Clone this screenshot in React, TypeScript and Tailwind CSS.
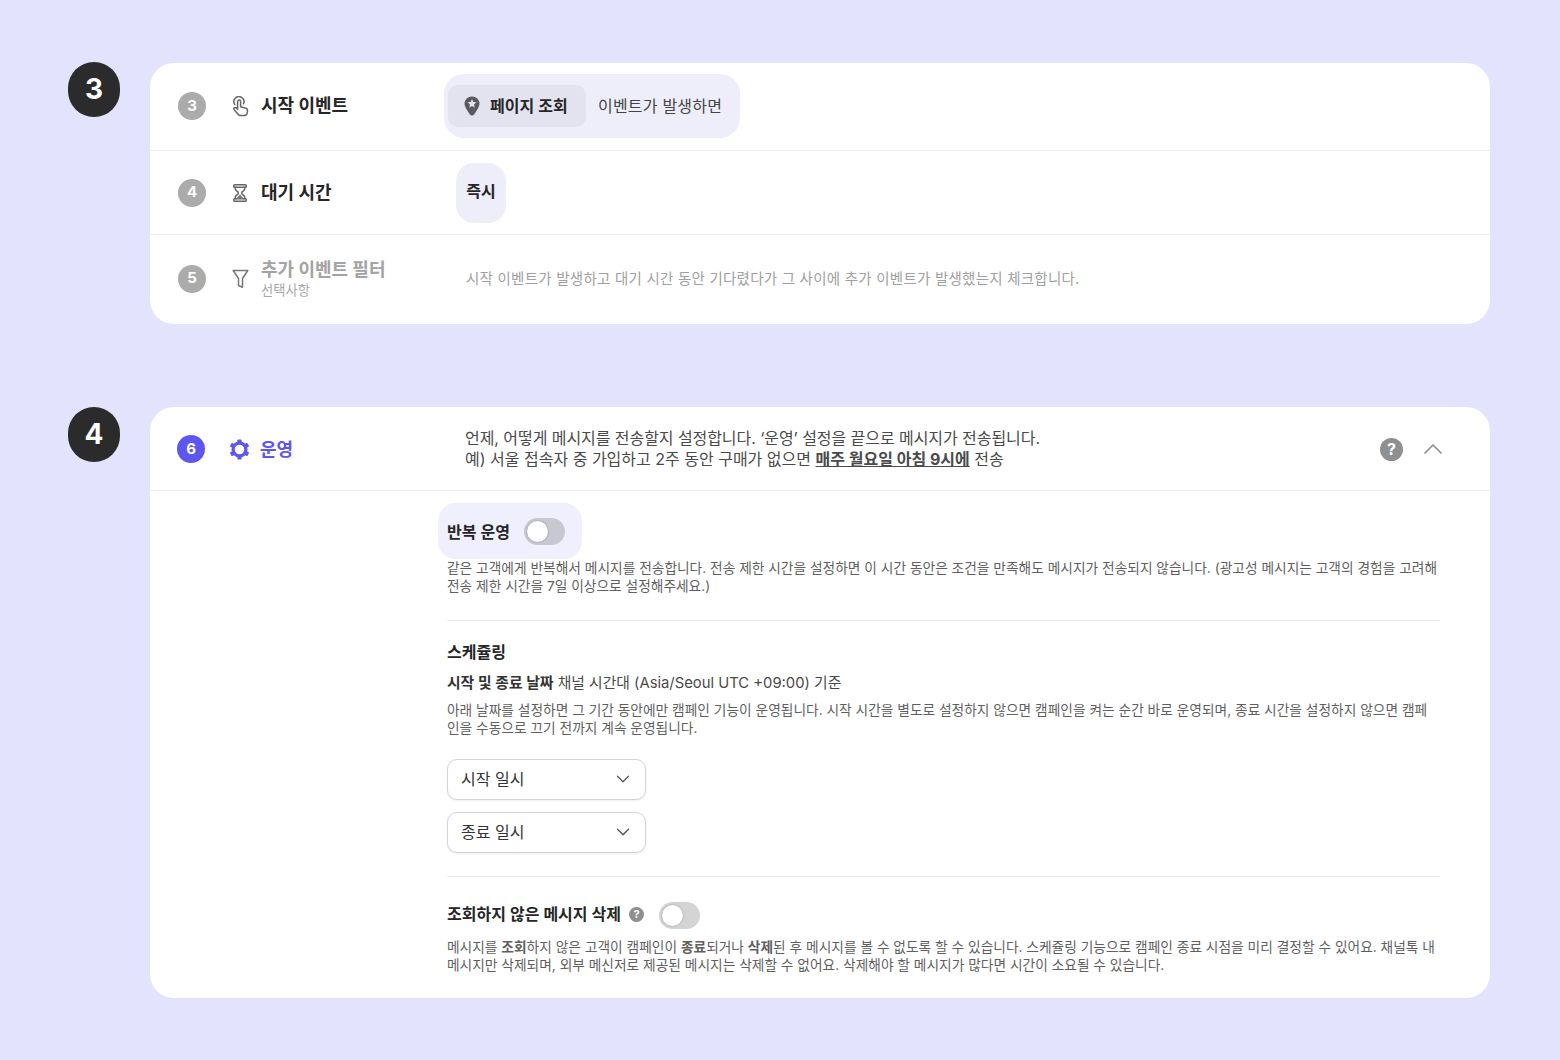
import { ChevronDown, ChevronUp } from "lucide-react";
import type { ReactNode } from "react";

const FONT = "font-['Inter','Noto_Sans_CJK_KR',sans-serif]";

function StepBadge({ n }: { n: number }) {
  return (
    <div className="flex h-[55px] w-[52px] shrink-0 items-center justify-center rounded-full bg-[#2b2b2b] pb-[2px] text-[28px] font-bold text-white">
      {n}
    </div>
  );
}

function NumberDot({ n, active }: { n: number; active?: boolean }) {
  return (
    <div
      className={`flex h-[28px] w-[28px] shrink-0 items-center justify-center rounded-full text-[15px] font-bold text-white ${
        active ? "bg-[#5e56f0]" : "bg-[#ababab]"
      }`}
    >
      {n}
    </div>
  );
}

function TapIcon() {
  return (
    <svg className="h-[21px] w-[17px] shrink-0" viewBox="0 0 17 21" fill="none" stroke="#666" strokeWidth="1.5" strokeLinecap="round" strokeLinejoin="round">
      <path d="M2.800 8.500a5 5 0 1 1 8.600-.6" />
      <path d="M5.600 5.500a1.500 1.500 0 0 1 3 0v5.200l4.600 1.200a3 3 0 0 1 2.300 3.200l-.3 2.100a3 3 0 0 1-3 2.300H8.500a3 3 0 0 1-2.400-1.200L2 13.400c-.8-1.100.6-2.500 1.700-1.700l1.900 1.400z" />
    </svg>
  );
}

function HourglassIcon() {
  return (
    <svg className="h-[18px] w-[14px] shrink-0" viewBox="0 0 14 18" fill="none" stroke="#666" strokeWidth="1.5" strokeLinecap="round" strokeLinejoin="round">
      <rect x="0.800" y="0.800" width="12.400" height="2.400" rx="0.800" />
      <rect x="0.800" y="14.800" width="12.400" height="2.400" rx="0.800" />
      <path d="M2.200 3.200v1.500c0 1.800 3.200 2.800 3.200 4.300s-3.200 2.500-3.200 4.300v1.500M11.800 3.200v1.500c0 1.800-3.200 2.800-3.200 4.300s3.200 2.500 3.200 4.300v1.500" />
      <path d="M7 10.200l3.600 4.600H3.400L7 10.200z" fill="#777" stroke="none" />
    </svg>
  );
}

function FunnelIcon() {
  return (
    <svg className="h-[20px] w-[17px] shrink-0" viewBox="0 0 17 20" fill="none" stroke="#777" strokeWidth="1.5" strokeLinecap="round" strokeLinejoin="round">
      <path d="M1.200 1.500h14.600L10.500 9.500v8.800l-4-1.800v-7z" />
    </svg>
  );
}

function PinStarIcon() {
  return (
    <svg className="h-[20px] w-[16px] shrink-0" viewBox="0 0 16 20">
      <path fill="#5a5a5e" d="M8 .5C3.800.5.500 3.700.5 7.800c0 3 2.300 6.300 5.400 10.700.9 1.200 3.300 1.200 4.200 0 3.100-4.400 5.400-7.700 5.400-10.700C15.500 3.700 12.200.5 8 .5z" />
      <polygon fill="#e3e3ef" points="8,3.100 9.250,6 12.400,6.300 10,8.400 10.700,11.400 8,9.900 5.300,11.400 6,8.400 3.600,6.300 6.750,6" />
    </svg>
  );
}

function GearIcon() {
  return (
    <svg className="h-[23px] w-[23px] shrink-0" viewBox="0 0 24 24" fill="#5e56f0">
      <circle cx="12" cy="12" r="6.700" fill="none" stroke="#5e56f0" strokeWidth="3.400" />
      <rect x="9.800" y="1.500" width="4.400" height="4.500" rx="0.800" />
      <rect x="9.800" y="1.500" width="4.400" height="4.500" rx="0.800" transform="rotate(60 12 12)" />
      <rect x="9.800" y="1.500" width="4.400" height="4.500" rx="0.800" transform="rotate(120 12 12)" />
      <rect x="9.800" y="1.500" width="4.400" height="4.500" rx="0.800" transform="rotate(180 12 12)" />
      <rect x="9.800" y="1.500" width="4.400" height="4.500" rx="0.800" transform="rotate(240 12 12)" />
      <rect x="9.800" y="1.500" width="4.400" height="4.500" rx="0.800" transform="rotate(300 12 12)" />
    </svg>
  );
}

function HelpDot({ size }: { size: "sm" | "lg" }) {
  return (
    <div
      className={
        size === "lg"
          ? "flex h-[23px] w-[23px] items-center justify-center rounded-full bg-[#8f8f8f] text-[16px] font-bold text-white"
          : "flex h-[15px] w-[15px] items-center justify-center rounded-full bg-[#8f8f8f] text-[11px] font-bold text-white"
      }
    >
      ?
    </div>
  );
}

function Toggle({ className }: { className: string }) {
  return (
    <div className={`flex h-[27px] w-[41px] shrink-0 items-center rounded-full p-[3px] ${className}`}>
      <div className="aspect-square h-full rounded-full bg-white shadow-[0_0_2px_rgba(0,0,0,0.35)]" />
    </div>
  );
}

function DateSelect({ label }: { label: string }) {
  return (
    <div className="flex h-[41px] w-[199px] items-center justify-between rounded-[10px] border border-[#d5d5d9] bg-white pb-px pl-[13px] pr-[11px] text-[16px] text-[#333] shadow-[0_1px_2px_rgba(0,0,0,0.08)]">
      {label}
      <ChevronDown size={22} color="#555" strokeWidth={1.4} />
    </div>
  );
}

function StepRow({
  n,
  icon,
  title,
  sub,
  muted,
  className,
  children,
}: {
  n: number;
  icon: ReactNode;
  title: string;
  sub?: string;
  muted?: boolean;
  className: string;
  children: ReactNode;
}) {
  return (
    <div className={`flex items-center ${className}`}>
      <div className="flex w-[294px] shrink-0 items-center pl-[28px]">
        <NumberDot n={n} />
        <div className="ml-[24px] flex w-[20px] justify-center">{icon}</div>
        <div className="ml-[11px]">
          <div className={`text-[18px] leading-[22px] font-bold ${muted ? "text-[#a3a3a3]" : "text-[#262626]"}`}>{title}</div>
          {sub && <div className="text-[13.300px] leading-[18px] text-[#a8a8a8]">{sub}</div>}
        </div>
      </div>
      {children}
    </div>
  );
}

export default function App() {
  return (
    <div className={`${FONT} h-[1060px] w-[1560px] overflow-hidden bg-[#e3e3fe] pl-[68px] pt-[62px]`}>
      {/* 3: trigger */}
      <div className="flex gap-[30px]">
        <StepBadge n={3} />
        <div className="mt-px w-[1340px] overflow-hidden rounded-[24px] bg-white">
          <StepRow n={3} icon={<TapIcon />} title="시작 이벤트" className="h-[88px] border-b border-[#efefef] pb-px">
            <div className="flex h-[64px] w-[296px] items-center rounded-[20px] bg-[#eeeefb] pl-[4px]">
              <div className="flex h-[42px] w-[138px] items-center gap-[10px] rounded-[10px] bg-[#e3e3ef] pl-[16px] text-[16px] font-semibold text-[#262626]">
                <PinStarIcon />
                페이지 조회
              </div>
              <span className="mb-px ml-[12px] text-[16px] tracking-[0.2px] text-[#444]">이벤트가 발생하면</span>
            </div>
          </StepRow>
          <StepRow n={4} icon={<HourglassIcon />} title="대기 시간" className="h-[84px] border-b border-[#efefef]">
            <div className="ml-[12px] flex h-[60px] w-[50px] items-center justify-center rounded-[18px] bg-[#eeeefb] pb-[3px] text-[16px] font-semibold text-[#262626]">
              즉시
            </div>
          </StepRow>
          <StepRow n={5} icon={<FunnelIcon />} title="추가 이벤트 필터" sub="선택사항" muted className="h-[89px] pb-[2px]">
            <p className="ml-[22px] text-[14.500px] tracking-[0.25px] text-[#a0a0a0]">
              시작 이벤트가 발생하고 대기 시간 동안 기다렸다가 그 사이에 추가 이벤트가 발생했는지 체크합니다.
            </p>
          </StepRow>
        </div>
      </div>

      {/* 4: operation */}
      <div className="mt-[83px] flex gap-[30px]">
        <StepBadge n={4} />
        <div className="w-[1340px] overflow-hidden rounded-[24px] bg-white">
          <div className="flex h-[84px] items-center border-b border-[#efefef] pt-px">
            <div className="flex w-[315px] shrink-0 items-center pl-[27px]">
              <NumberDot n={6} active />
              <div className="ml-[23px] flex w-[22px] justify-center">
                <GearIcon />
              </div>
              <span className="ml-[10px] text-[18px] font-bold text-[#5e56f0]">운영</span>
            </div>
            <p className="text-[16px] leading-[21px] whitespace-nowrap text-[#4a4a4a]">
              <span className="tracking-[-0.06px]">언제, 어떻게 메시지를 전송할지 설정합니다. ‘운영’ 설정을 끝으로 메시지가 전송됩니다.</span>
              <br />
              예) 서울 접속자 중 가입하고 2주 동안 구매가 없으면{" "}
              <span className="font-bold underline">매주 월요일 아침 9시에</span> 전송
            </p>
            <div className="ml-auto mr-[41px] flex items-center gap-[14px]">
              <HelpDot size="lg" />
              <ChevronUp size={32} color="#8f8f8f" strokeWidth={1.3} />
            </div>
          </div>

          <div className="pb-[24px] pl-[297px] pr-[50px] pt-[12px]">
            <div className="-ml-[9px] flex h-[56px] w-[144px] items-center gap-[14px] rounded-[18px] bg-[#f0effd] pl-[9px] pt-px text-[16px] font-semibold text-[#262626]">
              반복 운영
              <Toggle className="bg-[#c8c8d2]" />
            </div>
            <p className="text-[13.730px] leading-[18px] whitespace-nowrap text-[#5f5f5f]">
              같은 고객에게 반복해서 메시지를 전송합니다. 전송 제한 시간을 설정하면 이 시간 동안은 조건을 만족해도 메시지가 전송되지 않습니다. (광고성 메시지는 고객의 경험을 고려해
              <br />
              전송 제한 시간을 7일 이상으로 설정해주세요.)
            </p>

            <div className="mt-[25px] border-t border-[#ececec] pt-[21px]">
              <h3 className="text-[16px] leading-[20px] font-semibold text-[#262626]">스케쥴링</h3>
              <p className="mt-[11px] text-[14.800px] leading-[20px] text-[#4a4a4a]">
                <span className="font-semibold text-[#333]">시작 및 종료 날짜</span> 채널 시간대 (Asia/Seoul UTC +09:00) 기준
              </p>
              <p className="mt-[8px] text-[13.730px] leading-[18px] whitespace-nowrap text-[#5f5f5f]">
                아래 날짜를 설정하면 그 기간 동안에만 캠페인 기능이 운영됩니다. 시작 시간을 별도로 설정하지 않으면 캠페인을 켜는 순간 바로 운영되며, 종료 시간을 설정하지 않으면 캠페
                <br />
                인을 수동으로 끄기 전까지 계속 운영됩니다.
              </p>
              <div className="mt-[22px] flex flex-col gap-[12px]">
                <DateSelect label="시작 일시" />
                <DateSelect label="종료 일시" />
              </div>
            </div>

            <div className="mt-[23px] border-t border-[#ececec] pt-[25px]">
              <div className="flex h-[27px] items-center text-[16px] font-semibold text-[#262626]">
                <span className="mb-[3px]">조회하지 않은 메시지 삭제</span>
                <div className="mb-[3px] ml-[8px]">
                  <HelpDot size="sm" />
                </div>
                <Toggle className="ml-[15px] bg-[#d4d4d4]" />
              </div>
              <p className="mt-[9px] text-[13.730px] leading-[18px] whitespace-nowrap text-[#5f5f5f]">
                메시지를 <b className="font-semibold">조회</b>하지 않은 고객이 캠페인이 <b className="font-semibold">종료</b>되거나 <b className="font-semibold">삭제</b>된 후 메시지를 볼 수 없도록 할 수 있습니다. 스케쥴링 기능으로 캠페인 종료 시점을 미리 결정할 수 있어요. 채널톡 내
                <br />
                메시지만 삭제되며, 외부 메신저로 제공된 메시지는 삭제할 수 없어요. 삭제해야 할 메시지가 많다면 시간이 소요될 수 있습니다.
              </p>
            </div>
          </div>
        </div>
      </div>
    </div>
  );
}
